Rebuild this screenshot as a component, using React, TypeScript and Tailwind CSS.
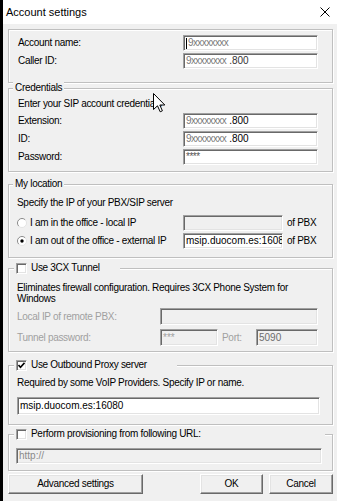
import type { ReactNode } from 'react';

const sunken =
  'border border-[#a0a0a0] border-b-white border-r-white shadow-[inset_1px_1px_0_#696969,inset_-1px_-1px_0_#e3e3e3]';
const raised =
  'border border-white border-b-[#696969] border-r-[#696969] shadow-[inset_-1px_-1px_0_#a0a0a0,inset_1px_1px_0_#e3e3e3]';
const etched =
  'relative box-border border border-[#bfbfbf] shadow-[inset_1px_1px_0_#fff,1px_1px_0_#fff]';

function Field({ className = '', disabled = false, children }: { className?: string; disabled?: boolean; children?: ReactNode }) {
  return (
    <div
      className={`${sunken} ${disabled ? 'bg-[#f0f0f0]' : 'bg-white'} box-border flex items-center overflow-hidden whitespace-nowrap pl-[2px] tracking-normal ${className}`}
    >
      {children}
    </div>
  );
}

function Check({ checked = false }: { checked?: boolean }) {
  return (
    <span className={`${sunken} box-border flex h-[11px] w-[11px] shrink-0 items-center justify-center bg-white`}>
      {checked && (
        <svg width="7" height="7" viewBox="0 0 7 7" aria-hidden="true">
          <path d="M0.5 3 L2.5 5.2 L6.5 0.8" fill="none" stroke="#000" strokeWidth="1.6" />
        </svg>
      )}
    </span>
  );
}

function Radio({ checked = false }: { checked?: boolean }) {
  return (
    <svg width="10" height="10" viewBox="0 0 10 10" className="shrink-0" aria-hidden="true">
      <circle cx="5" cy="5" r="4.5" fill="#fff" />
      <path d="M1.8 8.2 A4.5 4.5 0 0 1 8.2 1.8" fill="none" stroke="#8a8a8a" strokeWidth="1" />
      <path d="M8.2 1.8 A4.5 4.5 0 0 1 1.8 8.2" fill="none" stroke="#e3e3e3" strokeWidth="1" />
      {checked && <circle cx="5" cy="5" r="1.7" fill="#000" />}
    </svg>
  );
}

function Legend({ children, className = '' }: { children: ReactNode; className?: string }) {
  return (
    <div className={`absolute -top-[7px] flex h-[12px] items-center bg-[#f0f0f0] leading-[12px] ${className}`}>
      {children}
    </div>
  );
}

function Gray({ children }: { children: ReactNode }) {
  return <span className="text-[#7a7a7a] tracking-[-0.6px]">{children}</span>;
}

export default function App() {
  return (
    <div className="relative flex h-[501px] w-[337px] overflow-hidden bg-black font-['Liberation_Sans',Arial,sans-serif] text-[10px] leading-[12px] tracking-[-0.3px] text-black">
      <div className="ml-[3px] flex w-[334px] flex-col bg-[#f0f0f0]">
        {/* title bar */}
        <div className="flex h-[24px] shrink-0 items-center justify-between bg-white pl-[3px] pr-[7px]">
          <span className="text-[11px] leading-[14px] tracking-normal">Account settings</span>
          <svg width="10" height="10" viewBox="0 0 10 10" aria-hidden="true">
            <path d="M0.5 0.5 L9.5 9.5 M9.5 0.5 L0.5 9.5" stroke="#000" strokeWidth="1" />
          </svg>
        </div>

        <div className="flex flex-col pl-[5px] pr-[4px]">
          {/* account */}
          <div className={`${etched} mt-[5px] flex h-[54px] flex-col gap-[2px] pl-[9px] pt-[5px]`}>
            <div className="flex h-[16px] items-center">
              <span className="w-[165px]">Account name:</span>
              <Field className="h-[16px] w-[135px]">
                <span className="mr-[1px] h-[11px] w-px bg-black" />
                <Gray>9xxxxxxxx</Gray>
              </Field>
            </div>
            <div className="flex h-[16px] items-center">
              <span className="w-[165px]">Caller ID:</span>
              <Field className="h-[16px] w-[135px]">
                <Gray>9xxxxxxxx</Gray>
                <span className="ml-[3px] text-[#333]">.800</span>
              </Field>
            </div>
          </div>

          {/* credentials */}
          <div className={`${etched} mt-[5px] flex h-[84px] flex-col pl-[9px] pt-[9px]`}>
            <Legend className="left-[4px] px-[2px]">Credentials</Legend>
            <span className="h-[12px]">Enter your SIP account credentials</span>
            <div className="mt-[3px] flex flex-col gap-[2px]">
              <div className="flex h-[16px] items-center">
                <span className="w-[165px]">Extension:</span>
                <Field className="h-[16px] w-[135px]">
                  <Gray>9xxxxxxxx</Gray>
                  <span className="ml-[3px]">.800</span>
                </Field>
              </div>
              <div className="flex h-[16px] items-center">
                <span className="w-[165px]">ID:</span>
                <Field className="h-[16px] w-[135px]">
                  <Gray>9xxxxxxxx</Gray>
                  <span className="ml-[3px]">.800</span>
                </Field>
              </div>
              <div className="flex h-[16px] items-center">
                <span className="w-[165px]">Password:</span>
                <Field className="h-[16px] w-[135px]">
                  <span className="text-[#555] tracking-[-0.5px]">****</span>
                </Field>
              </div>
            </div>
          </div>

          {/* location */}
          <div className={`${etched} mt-[12px] flex h-[74px] flex-col pl-[8px] pt-[12px]`}>
            <Legend className="left-[4px] px-[2px]">My location</Legend>
            <span className="h-[12px]">Specify the IP of your PBX/SIP server</span>
            <div className="mt-[6px] flex flex-col gap-[2px]">
              <div className="flex h-[16px] items-center">
                <span className="flex w-[166px] items-center gap-[3px]">
                  <Radio />
                  I am in the office - local IP
                </span>
                <Field disabled className="h-[16px] w-[100px]" />
                <span className="ml-[4px]">of PBX</span>
              </div>
              <div className="flex h-[16px] items-center">
                <span className="flex w-[166px] items-center gap-[3px]">
                  <Radio checked />
                  I am out of the office - external IP
                </span>
                <Field className="h-[16px] w-[100px]">msip.duocom.es:16080</Field>
                <span className="ml-[4px]">of PBX</span>
              </div>
            </div>
          </div>

          {/* 3CX tunnel */}
          <div className={`${etched} mt-[10px] flex h-[84px] flex-col pl-[8px] pt-[13px]`}>
            <Legend className="left-[5px] w-[106px] gap-[4px] pl-[2px]">
              <Check />
              <span>Use 3CX Tunnel</span>
            </Legend>
            <p className="max-w-[285px] leading-[11px]">
              Eliminates firewall configuration. Requires 3CX Phone System for Windows
            </p>
            <div className="mt-[4px] flex h-[17px] items-center">
              <span className="w-[143px] text-[#a0a0a0]">Local IP of remote PBX:</span>
              <Field disabled className="h-[17px] w-[158px]" />
            </div>
            <div className="mt-[4px] flex h-[17px] items-center">
              <span className="w-[143px] text-[#a0a0a0]">Tunnel password:</span>
              <Field disabled className="h-[17px] w-[58px]">
                <span className="text-[#a0a0a0]">***</span>
              </Field>
              <span className="ml-[4px] w-[34px] text-[#a0a0a0]">Port:</span>
              <Field disabled className="h-[17px] w-[62px]">
                <span className="text-[#6d6d6d]">5090</span>
              </Field>
            </div>
          </div>

          {/* outbound proxy */}
          <div className={`${etched} mt-[13px] flex h-[60px] flex-col pl-[8px] pt-[11px]`}>
            <Legend className="left-[5px] w-[163px] gap-[4px] pl-[2px]">
              <Check checked />
              <span>Use Outbound Proxy server</span>
            </Legend>
            <span className="h-[12px]">Required by some VoIP Providers. Specify IP or name.</span>
            <Field className="mt-[8px] h-[18px] w-[303px]">msip.duocom.es:16080</Field>
          </div>

          {/* provisioning */}
          <div className={`${etched} mt-[9px] flex h-[37px] flex-col pl-[7px] pt-[13px]`}>
            <Legend className="left-[5px] w-[311px] gap-[4px] pl-[2px]">
              <Check />
              <span>Perform provisioning from following URL:</span>
            </Legend>
            <Field disabled className="h-[16px] w-[306px]">
              <span className="text-[#8a8a8a]">http://</span>
            </Field>
          </div>

          {/* buttons */}
          <div className="mt-[3px] flex h-[20px] gap-[6px]">
            <button className={`${raised} box-border h-[20px] w-[135px] bg-[#f0f0f0] text-[10px]`}>Advanced settings</button>
            <button className={`${raised} ml-auto box-border h-[20px] w-[63px] bg-[#f0f0f0] text-[10px]`}>OK</button>
            <button className={`${raised} box-border h-[20px] w-[64px] bg-[#f0f0f0] text-[10px]`}>Cancel</button>
          </div>
        </div>
      </div>

      {/* mouse pointer */}
      <svg className="absolute left-[153px] top-[93px]" width="13" height="20" viewBox="0 0 13 20" aria-hidden="true">
        <path d="M0.5 0.5 V16.5 L4.5 12.8 L7.2 18.8 L9.4 17.8 L6.8 12 H11.8 Z" fill="#fff" stroke="#000" strokeWidth="1" strokeLinejoin="miter" />
      </svg>
    </div>
  );
}
